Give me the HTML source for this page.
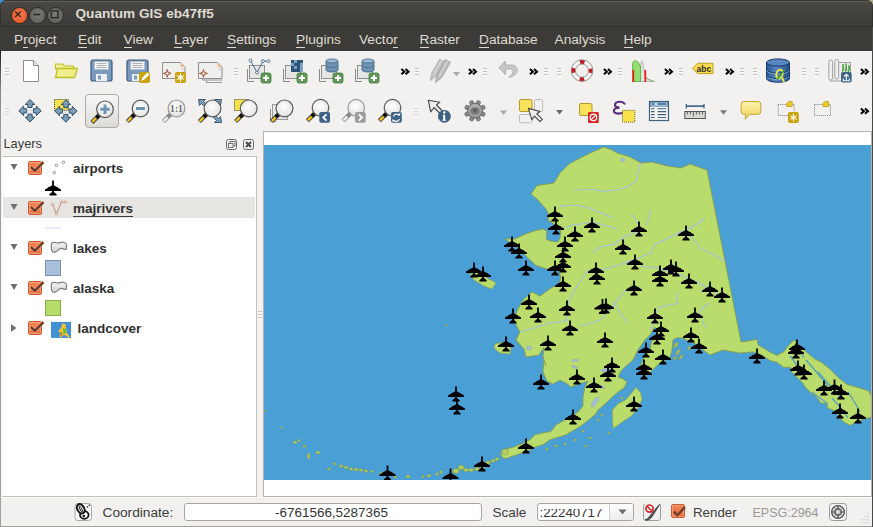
<!DOCTYPE html>
<html><head><meta charset="utf-8">
<style>
html,body{margin:0;padding:0;}
body{width:873px;height:527px;overflow:hidden;position:relative;background:#f2f1f0;font-family:"Liberation Sans",sans-serif;}
.abs{position:absolute;}
#titlebar{left:0;top:0;width:873px;height:27px;background:linear-gradient(#4a4945,#3c3b37);border-radius:6.5px 6.5px 0 0;box-shadow:inset 0 0 0 0.6px #2a2926;}
#menubar{left:0;top:27px;width:873px;height:24px;background:#3c3b37;}
.menu{position:absolute;top:31px;color:#dfdbd2;font-size:13.7px;line-height:17px;white-space:nowrap;}
.menu u{text-decoration:none;border-bottom:1px solid #dfdbd2;}
.title{position:absolute;left:75.5px;top:6px;color:#dfdbd2;font-weight:bold;font-size:13.6px;line-height:16px;white-space:nowrap;}
.wb{position:absolute;top:6.5px;width:15px;height:15px;border-radius:50%;}
#tree{left:2px;top:156px;width:255px;height:341px;background:#fff;border:1px solid #c3c0ba;border-left:none;box-sizing:border-box;}
.lname{position:absolute;font-weight:bold;font-size:13.5px;line-height:16px;color:#303030;white-space:nowrap;}
.cb{position:absolute;width:14px;height:14px;box-sizing:border-box;border-radius:2px;background:linear-gradient(#f48456,#ea6e40);border:1px solid #cc5a2a;box-shadow:inset 0 0 0 1px rgba(255,220,200,0.35);}
#canvas{left:263px;top:131px;width:609px;height:366px;background:#fff;border:1px solid #b5b2ac;box-sizing:border-box;}
#status{left:0;top:497px;width:873px;height:30px;background:#f2f1f0;border-top:1px solid #fbfbfa;border-bottom:1px solid #a3a19c;box-sizing:border-box;}
.st{position:absolute;font-size:13.5px;line-height:16px;color:#3c3c3c;white-space:nowrap;}
</style></head><body>
<div class="abs" style="left:0;top:0;width:7px;height:7px;background:#3b8fd2"></div>
<div class="abs" style="left:866px;top:0;width:7px;height:7px;background:#a9a98a"></div>
<div id="titlebar" class="abs"></div>
<div id="menubar" class="abs"></div>
<div class="abs" style="left:3px;top:1px;width:867px;height:1px;background:#5e5d58;"></div>
<div class="wb" style="left:10.5px;background:radial-gradient(circle at 50% 40%,#f47a4e,#e2502a);border:1px solid #3a2a22;"></div>
<div class="wb" style="left:28.5px;background:radial-gradient(circle at 50% 40%,#7a7974,#5c5b56);border:1px solid #2e2d2a;"></div>
<div class="wb" style="left:46.5px;background:radial-gradient(circle at 50% 40%,#7a7974,#5c5b56);border:1px solid #2e2d2a;"></div>
<svg class="abs" style="left:-1px;top:-0.5px" width="80" height="27">
<path d="M16.2,11.4 l5.6,5.6 M21.8,11.4 l-5.6,5.6" stroke="#3a2418" stroke-width="1.4"/>
<path d="M34.3,14.5 h7" stroke="#2a2a28" stroke-width="1.6"/>
<rect x="52.2" y="10.9" width="6.8" height="6.8" fill="none" stroke="#2a2a28" stroke-width="1.4"/>
</svg>
<div class="title">Quantum GIS eb47ff5</div>
<div class="menu" style="left:14px">P<u>r</u>oject</div>
<div class="menu" style="left:78px"><u>E</u>dit</div>
<div class="menu" style="left:123.5px"><u>V</u>iew</div>
<div class="menu" style="left:174px"><u>L</u>ayer</div>
<div class="menu" style="left:227px"><u>S</u>ettings</div>
<div class="menu" style="left:296px"><u>P</u>lugins</div>
<div class="menu" style="left:359px">Vecto<u>r</u></div>
<div class="menu" style="left:419.5px"><u>R</u>aster</div>
<div class="menu" style="left:479px"><u>D</u>atabase</div>
<div class="menu" style="left:554.5px">Analysis</div>
<div class="menu" style="left:623.5px"><u>H</u>elp</div>

<svg class="abs" style="left:0;top:0" width="873" height="130">
<defs><radialGradient id="lens" cx="0.45" cy="0.4" r="0.6"><stop offset="0" stop-color="#ffffff"/><stop offset="1" stop-color="#e2e2e2"/></radialGradient><radialGradient id="gear" cx="0.5" cy="0.4" r="0.6"><stop offset="0" stop-color="#c8c8c8"/><stop offset="1" stop-color="#8a8a8a"/></radialGradient><linearGradient id="dbg" x1="0" y1="0" x2="1" y2="0"><stop offset="0" stop-color="#2a5894"/><stop offset="0.45" stop-color="#5a88c4"/><stop offset="1" stop-color="#1e4a86"/></linearGradient><linearGradient id="balloon" x1="0" y1="0" x2="0" y2="1"><stop offset="0" stop-color="#fcf0a8"/><stop offset="1" stop-color="#f0d65a"/></linearGradient><linearGradient id="btn" x1="0" y1="0" x2="0" y2="1"><stop offset="0" stop-color="#f7f7f6"/><stop offset="1" stop-color="#dcdbd8"/></linearGradient></defs>
<rect x="5" y="68" width="4" height="1" fill="#c2bfba"/><rect x="5" y="69" width="4" height="1" fill="#ffffff"/><rect x="5" y="71" width="4" height="1" fill="#c2bfba"/><rect x="5" y="72" width="4" height="1" fill="#ffffff"/><rect x="5" y="74" width="4" height="1" fill="#c2bfba"/><rect x="5" y="75" width="4" height="1" fill="#ffffff"/><path d="M23.5,60.5 h10 l5,5 v16 h-15 z" fill="#fff" stroke="#8c8c8c" stroke-width="1"/><path d="M33.5,60.5 v5 h5" fill="#e6e6e6" stroke="#8c8c8c" stroke-width="1"/><path d="M55.5,64 h7 l2,2 h9 v3 h-18 z" fill="#f0ef9a" stroke="#bfc026" stroke-width="1.2"/><path d="M57.5,68.5 h20 l-3,9 h-19 z" fill="#efee8a" stroke="#bfc026" stroke-width="1.3"/><rect x="91" y="60" width="21" height="21" rx="2" fill="#7a9bbd" stroke="#3a5a7c" stroke-width="1.2"/><rect x="94.5" y="61.5" width="14" height="8" fill="#f4f4f4" stroke="#b0b8c0" stroke-width="0.6"/><path d="M96.5,63.5 h10 M96.5,65.5 h10 M96.5,67.5 h10" stroke="#9aa0a6" stroke-width="0.8"/><rect x="96" y="74" width="11" height="7" fill="#eef0f2"/><rect x="98" y="75.5" width="3" height="4" fill="#7a9bbd"/><rect x="127" y="60" width="21" height="21" rx="2" fill="#7a9bbd" stroke="#3a5a7c" stroke-width="1.2"/><rect x="130.5" y="61.5" width="14" height="8" fill="#f4f4f4" stroke="#b0b8c0" stroke-width="0.6"/><path d="M132.5,63.5 h10 M132.5,65.5 h10 M132.5,67.5 h10" stroke="#9aa0a6" stroke-width="0.8"/><rect x="132" y="74" width="11" height="7" fill="#eef0f2"/><rect x="134" y="75.5" width="3" height="4" fill="#7a9bbd"/><rect x="139" y="72" width="11" height="11" rx="2" fill="#c9a20c"/><path d="M141,81 l1.5,-3.5 l5,-5 l2,2 l-5,5 z" fill="#fff"/><path d="M162.5,62.5 h18 l4.5,4.5 v11.5 h-22.5 z" fill="#efefed" stroke="#8e8e8e" stroke-width="1"/><path d="M180.5,62.5 v4.5 h4.5 z" fill="#f2c28e"/><path d="M181.5,68.5 h3 M181.5,69.8 h3" stroke="#c8c8c8" stroke-width="0.6"/><path d="M167.3,69.60000000000001 L168.20000000000002,72.5 L171.10000000000002,73.4 L168.20000000000002,74.30000000000001 L167.3,77.2 L166.4,74.30000000000001 L163.5,73.4 L166.4,72.5 Z" fill="#f0eeec" stroke="#a04a2a" stroke-width="1"/><rect x="175" y="72" width="11" height="11" rx="2" fill="#c9a20c"/><circle cx="180.5" cy="77.5" r="1.8" fill="none" stroke="#fff" stroke-width="1.1"/><path d="M180.5,73 v9 M176.6,75.2 l7.8,4.5 M176.6,79.8 l7.8,-4.5" stroke="#fff" stroke-width="0.9"/><path d="M202.5,78.5 v1.5 h19.5 M206.5,80.5 v2 h15.5" stroke="#8e8e8e" stroke-width="0.9" fill="none"/><path d="M198.5,62.5 h19 l4.5,4.5 v11.5 h-23.5 z" fill="#efefed" stroke="#8e8e8e" stroke-width="1"/><path d="M217.5,62.5 v4.5 h4.5 z" fill="#f2c28e"/><path d="M218.5,68.5 h3 M218.5,69.8 h3" stroke="#c8c8c8" stroke-width="0.6"/><path d="M203.5,69.60000000000001 L204.4,72.5 L207.3,73.4 L204.4,74.30000000000001 L203.5,77.2 L202.6,74.30000000000001 L199.7,73.4 L202.6,72.5 Z" fill="#f0eeec" stroke="#a04a2a" stroke-width="1"/><rect x="234" y="68" width="4" height="1" fill="#c2bfba"/><rect x="234" y="69" width="4" height="1" fill="#ffffff"/><rect x="234" y="71" width="4" height="1" fill="#c2bfba"/><rect x="234" y="72" width="4" height="1" fill="#ffffff"/><rect x="234" y="74" width="4" height="1" fill="#c2bfba"/><rect x="234" y="75" width="4" height="1" fill="#ffffff"/><path d="M247.5,69 v12.5 h6.5" stroke="#8a8a8a" stroke-width="1" fill="none"/><rect x="249.5" y="65.5" width="15" height="13" fill="#e6e6e4" stroke="#8e8e8e" stroke-width="1"/><path d="M250.5,60.5 L257,72.5 L263,61.2 H268.4" stroke="#4e6e8e" stroke-width="1" fill="none"/><circle cx="250.5" cy="60.5" r="1.5" fill="#e8eef4" stroke="#4e6e8e" stroke-width="0.9"/><circle cx="257" cy="72.5" r="1.5" fill="#e8eef4" stroke="#4e6e8e" stroke-width="0.9"/><circle cx="263" cy="61.2" r="1.5" fill="#e8eef4" stroke="#4e6e8e" stroke-width="0.9"/><circle cx="268.4" cy="61.2" r="1.5" fill="#e8eef4" stroke="#4e6e8e" stroke-width="0.9"/><rect x="261" y="73" width="10" height="10" rx="2" fill="#5f9a58" stroke="#3f7a3a" stroke-width="0.8"/><path d="M266,75 v6 M263,78 h6" stroke="#fff" stroke-width="2"/><path d="M283.5,69 v12.5 h6.5" stroke="#8a8a8a" stroke-width="1" fill="none"/><rect x="285.5" y="65.5" width="15" height="13" fill="#e6e6e4" stroke="#8e8e8e" stroke-width="1"/><rect x="291" y="60" width="12" height="12" fill="#7fa4c4"/><rect x="291" y="60" width="3" height="3" fill="#2d5278"/><rect x="297" y="60" width="6" height="3" fill="#2d5278"/><rect x="294" y="63" width="6" height="3" fill="#2d5278"/><rect x="291" y="66" width="3" height="3" fill="#2d5278"/><rect x="297" y="66" width="3" height="3" fill="#2d5278"/><rect x="291" y="69" width="9" height="3" fill="#2d5278"/><rect x="297" y="73" width="10" height="10" rx="2" fill="#5f9a58" stroke="#3f7a3a" stroke-width="0.8"/><path d="M302,75 v6 M299,78 h6" stroke="#fff" stroke-width="2"/><path d="M319.5,69 v12.5 h6.5" stroke="#8a8a8a" stroke-width="1" fill="none"/><rect x="321.5" y="65.5" width="15" height="13" fill="#e6e6e4" stroke="#8e8e8e" stroke-width="1"/><path d="M326,61 v9 a6.0,2 0 0 0 12,0 v-9" fill="#6f93b3" stroke="#4a6a88" stroke-width="0.9"/><ellipse cx="332.0" cy="61" rx="6.0" ry="2" fill="#9fbad2" stroke="#4a6a88" stroke-width="0.9"/><path d="M326,65.5 a6.0,2 0 0 0 12,0" fill="none" stroke="#4a6a88" stroke-width="0.8"/><rect x="333" y="73" width="10" height="10" rx="2" fill="#5f9a58" stroke="#3f7a3a" stroke-width="0.8"/><path d="M338,75 v6 M335,78 h6" stroke="#fff" stroke-width="2"/><path d="M355.5,69 v12.5 h6.5" stroke="#8a8a8a" stroke-width="1" fill="none"/><rect x="357.5" y="65.5" width="15" height="13" fill="#e6e6e4" stroke="#8e8e8e" stroke-width="1"/><path d="M362,61 v9 a6.0,2 0 0 0 12,0 v-9" fill="#6f93b3" stroke="#4a6a88" stroke-width="0.9"/><ellipse cx="368.0" cy="61" rx="6.0" ry="2" fill="#9fbad2" stroke="#4a6a88" stroke-width="0.9"/><path d="M362,65.5 a6.0,2 0 0 0 12,0" fill="none" stroke="#4a6a88" stroke-width="0.8"/><rect x="369" y="73" width="10" height="10" rx="2" fill="#5f9a58" stroke="#3f7a3a" stroke-width="0.8"/><path d="M374,75 v6 M371,78 h6" stroke="#fff" stroke-width="2"/><path d="M401.4,69 l3,2.65 l-3,2.65 M405.5,69 l3,2.65 l-3,2.65" stroke="#000" stroke-width="2" fill="none"/><rect x="415" y="68" width="4" height="1" fill="#c2bfba"/><rect x="415" y="69" width="4" height="1" fill="#ffffff"/><rect x="415" y="71" width="4" height="1" fill="#c2bfba"/><rect x="415" y="72" width="4" height="1" fill="#ffffff"/><rect x="415" y="74" width="4" height="1" fill="#c2bfba"/><rect x="415" y="75" width="4" height="1" fill="#ffffff"/><path d="M430.3,80.8 L431.8,73 L439.6,59.3 L444.2,61.8 L436.4,75.6 Z" fill="#c4c4c4" stroke="#a8a8a8" stroke-width="0.8"/><path d="M433.5,74.5 L441.5,60.5" stroke="#e0e0e0" stroke-width="1"/><path d="M435.4,82.8 L436.9,75 L445,59.5 L450.5,62.3 L441.8,77.5 Z" fill="#bcbcbc" stroke="#a0a0a0" stroke-width="0.8"/><path d="M439,76.5 L447.3,61" stroke="#dedede" stroke-width="1"/><path d="M453,72 h7 l-3.5,4.5 z" fill="#a8a8a8"/><path d="M468.9,69 l3,2.65 l-3,2.65 M473,69 l3,2.65 l-3,2.65" stroke="#000" stroke-width="2" fill="none"/><rect x="483" y="68" width="4" height="1" fill="#c2bfba"/><rect x="483" y="69" width="4" height="1" fill="#ffffff"/><rect x="483" y="71" width="4" height="1" fill="#c2bfba"/><rect x="483" y="72" width="4" height="1" fill="#ffffff"/><rect x="483" y="74" width="4" height="1" fill="#c2bfba"/><rect x="483" y="75" width="4" height="1" fill="#ffffff"/><path d="M499.1,67.7 L505.4,61.1 V65.1 H511.5 C515,65.1 517.2,67.5 517.2,70.5 C517.2,73.6 514,76.6 508.8,77.3 C511,75.5 513,73.6 513,71.6 C513,70 512,69 510.5,69 H505.4 V74.5 Z" fill="#c8c8c8" stroke="#a6a6a6" stroke-width="0.9" stroke-linejoin="round"/><path d="M529.9,69 l3,2.65 l-3,2.65 M534,69 l3,2.65 l-3,2.65" stroke="#000" stroke-width="2" fill="none"/><rect x="544" y="68" width="4" height="1" fill="#c2bfba"/><rect x="544" y="69" width="4" height="1" fill="#ffffff"/><rect x="544" y="71" width="4" height="1" fill="#c2bfba"/><rect x="544" y="72" width="4" height="1" fill="#ffffff"/><rect x="544" y="74" width="4" height="1" fill="#c2bfba"/><rect x="544" y="75" width="4" height="1" fill="#ffffff"/><rect x="557" y="68" width="4" height="1" fill="#c2bfba"/><rect x="557" y="69" width="4" height="1" fill="#ffffff"/><rect x="557" y="71" width="4" height="1" fill="#c2bfba"/><rect x="557" y="72" width="4" height="1" fill="#ffffff"/><rect x="557" y="74" width="4" height="1" fill="#c2bfba"/><rect x="557" y="75" width="4" height="1" fill="#ffffff"/><circle cx="582" cy="70.6" r="8.7" fill="none" stroke="#f4f4f4" stroke-width="4.2"/><circle cx="582" cy="70.6" r="8.7" fill="none" stroke="#c41a20" stroke-width="4.2" stroke-dasharray="4.6 9.065" stroke-dashoffset="2.3"/><circle cx="582" cy="70.6" r="10.8" fill="none" stroke="#8a8a8a" stroke-width="0.9"/><circle cx="582" cy="70.6" r="6.6" fill="none" stroke="#8a8a8a" stroke-width="0.9"/><path d="M603.9,69 l3,2.65 l-3,2.65 M608,69 l3,2.65 l-3,2.65" stroke="#000" stroke-width="2" fill="none"/><rect x="618" y="68" width="4" height="1" fill="#c2bfba"/><rect x="618" y="69" width="4" height="1" fill="#ffffff"/><rect x="618" y="71" width="4" height="1" fill="#c2bfba"/><rect x="618" y="72" width="4" height="1" fill="#ffffff"/><rect x="618" y="74" width="4" height="1" fill="#c2bfba"/><rect x="618" y="75" width="4" height="1" fill="#ffffff"/><path d="M640,81.5 C640.5,70 640.8,62 641.6,61 C642.6,60.4 643.5,66 644,70 C645,75 646,78 648,79 C651,80.5 653,81 654.5,81.5 Z" fill="#e4e4e4" stroke="#a8a8a8" stroke-width="0.8"/><path d="M646,78 C649,80 652,81 654.5,81.5" fill="none" stroke="#6ab84a" stroke-width="0.9"/><path d="M632.6,81.5 V63.5 C633,60.5 635,60 637,61.3 C639,62.8 640,65 640.6,67 V81.5 Z" fill="#92dc72" stroke="#62b040" stroke-width="0.9"/><path d="M633.3,70 V82 M645.3,70 V82" stroke="#ee1a1a" stroke-width="1.7"/><path d="M664.9,69 l3,2.65 l-3,2.65 M669,69 l3,2.65 l-3,2.65" stroke="#000" stroke-width="2" fill="none"/><rect x="679" y="68" width="4" height="1" fill="#c2bfba"/><rect x="679" y="69" width="4" height="1" fill="#ffffff"/><rect x="679" y="71" width="4" height="1" fill="#c2bfba"/><rect x="679" y="72" width="4" height="1" fill="#ffffff"/><rect x="679" y="74" width="4" height="1" fill="#c2bfba"/><rect x="679" y="75" width="4" height="1" fill="#ffffff"/><path d="M692.5,68.3 l5,-5 h15.5 v10.3 h-15.5 z" fill="#f6dc4c" stroke="#c0a020" stroke-width="1"/><text x="696.5" y="72.2" font-family="Liberation Sans" font-weight="bold" font-size="8.6" fill="#303030">abc</text><path d="M725.9,69 l3,2.65 l-3,2.65 M730,69 l3,2.65 l-3,2.65" stroke="#000" stroke-width="2" fill="none"/><rect x="740" y="68" width="4" height="1" fill="#c2bfba"/><rect x="740" y="69" width="4" height="1" fill="#ffffff"/><rect x="740" y="71" width="4" height="1" fill="#c2bfba"/><rect x="740" y="72" width="4" height="1" fill="#ffffff"/><rect x="740" y="74" width="4" height="1" fill="#c2bfba"/><rect x="740" y="75" width="4" height="1" fill="#ffffff"/><rect x="753" y="68" width="4" height="1" fill="#c2bfba"/><rect x="753" y="69" width="4" height="1" fill="#ffffff"/><rect x="753" y="71" width="4" height="1" fill="#c2bfba"/><rect x="753" y="72" width="4" height="1" fill="#ffffff"/><rect x="753" y="74" width="4" height="1" fill="#c2bfba"/><rect x="753" y="75" width="4" height="1" fill="#ffffff"/><path d="M766.5,62.5 v16 a11.5,3.8 0 0 0 23,0 v-16" fill="url(#dbg)" stroke="#1a3a6a" stroke-width="1"/><ellipse cx="778" cy="62.5" rx="11.5" ry="3.6" fill="#5a86c0" stroke="#1a3a6a" stroke-width="1"/><path d="M766.5,69.5 a11.5,3.6 0 0 0 23,0 M766.5,75 a11.5,3.6 0 0 0 23,0" fill="none" stroke="#1a3a6a" stroke-width="1"/><path d="M767,70.7 a11,3.4 0 0 0 22,0 M767,76.2 a11,3.4 0 0 0 22,0" fill="none" stroke="#8ab0e0" stroke-width="0.8"/><ellipse cx="779.5" cy="74" rx="3" ry="4.5" transform="rotate(20 779.5 74)" fill="none" stroke="#e8e840" stroke-width="2"/><path d="M782,77 l2,5" stroke="#e8e840" stroke-width="2"/><path d="M777,80 l8,-11" stroke="#3a9a3a" stroke-width="1.3"/><rect x="802" y="68" width="4" height="1" fill="#c2bfba"/><rect x="802" y="69" width="4" height="1" fill="#ffffff"/><rect x="802" y="71" width="4" height="1" fill="#c2bfba"/><rect x="802" y="72" width="4" height="1" fill="#ffffff"/><rect x="802" y="74" width="4" height="1" fill="#c2bfba"/><rect x="802" y="75" width="4" height="1" fill="#ffffff"/><rect x="815" y="68" width="4" height="1" fill="#c2bfba"/><rect x="815" y="69" width="4" height="1" fill="#ffffff"/><rect x="815" y="71" width="4" height="1" fill="#c2bfba"/><rect x="815" y="72" width="4" height="1" fill="#ffffff"/><rect x="815" y="74" width="4" height="1" fill="#c2bfba"/><rect x="815" y="75" width="4" height="1" fill="#ffffff"/><path d="M838.5,62.5 h12 v18.5 h-21" fill="#ececec" stroke="#9a9a9a" stroke-width="0.9"/><rect x="828.8" y="60" width="3.8" height="20" rx="1.9" fill="#efefef" stroke="#9a9a9a" stroke-width="0.9"/><rect x="834.8" y="59.5" width="3.8" height="19.5" rx="1.9" fill="#efefef" stroke="#9a9a9a" stroke-width="0.9"/><path d="M842.5,72 l0.5,-8 l1,7 M845.5,72 l0.5,-8.5 l1,8 M848.5,72 l0.5,-7 l1,6" fill="none" stroke="#4aa040" stroke-width="1"/><rect x="841" y="72" width="10.7" height="10.6" rx="2" fill="#3d6284"/><path d="M846.3,80 v-5 M844,76.5 l2.3,-2.3 l2.3,2.3 M843.3,78.5 v2.2 h6 v-2.2" stroke="#fff" stroke-width="1.1" fill="none"/><path d="M860.9,69 l3,2.65 l-3,2.65 M865,69 l3,2.65 l-3,2.65" stroke="#000" stroke-width="2" fill="none"/><rect x="5" y="108.5" width="4" height="1" fill="#c2bfba"/><rect x="5" y="109.5" width="4" height="1" fill="#ffffff"/><rect x="5" y="111.5" width="4" height="1" fill="#c2bfba"/><rect x="5" y="112.5" width="4" height="1" fill="#ffffff"/><rect x="5" y="114.5" width="4" height="1" fill="#c2bfba"/><rect x="5" y="115.5" width="4" height="1" fill="#ffffff"/><rect x="24" y="104.8" width="12" height="12" fill="#fdfdfd"/><rect x="28" y="108.8" width="4" height="4" fill="#e6e6e6"/><path transform="rotate(0 30 110.8)" d="M30,99.6 L34.8,104.5 H32.1 V107.5 H27.9 V104.5 H25.2 Z" fill="#7b9db6" stroke="#2f506b" stroke-width="1" stroke-linejoin="miter"/><path transform="rotate(90 30 110.8)" d="M30,99.6 L34.8,104.5 H32.1 V107.5 H27.9 V104.5 H25.2 Z" fill="#7b9db6" stroke="#2f506b" stroke-width="1" stroke-linejoin="miter"/><path transform="rotate(180 30 110.8)" d="M30,99.6 L34.8,104.5 H32.1 V107.5 H27.9 V104.5 H25.2 Z" fill="#7b9db6" stroke="#2f506b" stroke-width="1" stroke-linejoin="miter"/><path transform="rotate(270 30 110.8)" d="M30,99.6 L34.8,104.5 H32.1 V107.5 H27.9 V104.5 H25.2 Z" fill="#7b9db6" stroke="#2f506b" stroke-width="1" stroke-linejoin="miter"/><rect x="59.900000000000006" y="105" width="12" height="12" fill="#fdfdfd"/><rect x="63.900000000000006" y="109" width="4" height="4" fill="#e6e6e6"/><rect x="54.5" y="99.5" width="14" height="10.8" fill="#f8e24a" stroke="#2a2a2a" stroke-width="0.9" stroke-dasharray="1,1"/><path transform="rotate(0 65.9 111)" d="M65.9,99.8 L70.7,104.7 H68.0 V107.7 H63.800000000000004 V104.7 H61.10000000000001 Z" fill="#7b9db6" stroke="#2f506b" stroke-width="1" stroke-linejoin="miter"/><path transform="rotate(90 65.9 111)" d="M65.9,99.8 L70.7,104.7 H68.0 V107.7 H63.800000000000004 V104.7 H61.10000000000001 Z" fill="#7b9db6" stroke="#2f506b" stroke-width="1" stroke-linejoin="miter"/><path transform="rotate(180 65.9 111)" d="M65.9,99.8 L70.7,104.7 H68.0 V107.7 H63.800000000000004 V104.7 H61.10000000000001 Z" fill="#7b9db6" stroke="#2f506b" stroke-width="1" stroke-linejoin="miter"/><path transform="rotate(270 65.9 111)" d="M65.9,99.8 L70.7,104.7 H68.0 V107.7 H63.800000000000004 V104.7 H61.10000000000001 Z" fill="#7b9db6" stroke="#2f506b" stroke-width="1" stroke-linejoin="miter"/><rect x="85.5" y="94.5" width="33" height="33" rx="3.5" fill="url(#btn)" stroke="#aeaaa4" stroke-width="1"/><path d="M99.6,114.7 L91.9,122.4" stroke="#3a3a3a" stroke-width="4.2"/><path d="M96.1,118.2 L92.3,122.0" stroke="#f2c41e" stroke-width="2.4"/><path d="M99.6,114.7 L96.6,117.7" stroke="#111" stroke-width="4"/><circle cx="105" cy="109.3" r="8.3" fill="url(#lens)" stroke="#5a5a5a" stroke-width="1.2"/><path d="M105,104.6 v9.4 M100.3,109.3 h9.4" stroke="#6d94b5" stroke-width="3"/><path d="M135.1,113.9 L127.4,121.6" stroke="#3a3a3a" stroke-width="4.2"/><path d="M131.6,117.4 L127.8,121.2" stroke="#f2c41e" stroke-width="2.4"/><path d="M135.1,113.9 L132.1,116.9" stroke="#111" stroke-width="4"/><circle cx="140.5" cy="108.5" r="8.3" fill="url(#lens)" stroke="#5a5a5a" stroke-width="1.2"/><path d="M136,108.5 h8.8" stroke="#6d94b5" stroke-width="3"/><path d="M171.1,113.8 L163.4,121.5" stroke="#8a8a8a" stroke-width="4.2"/><path d="M167.6,117.3 L163.8,121.1" stroke="#f4f4f4" stroke-width="2.4"/><path d="M171.1,113.8 L168.1,116.8" stroke="#888" stroke-width="4"/><circle cx="176.5" cy="108.4" r="8.4" fill="url(#lens)" stroke="#9a9a9a" stroke-width="1.2"/><text x="176.5" y="111.8" text-anchor="middle" font-family="Liberation Serif" font-weight="bold" font-size="9.6" fill="#6a6a6a">1:1</text><g fill="#7b9db6" stroke="#2f506b" stroke-width="0.9"><path d="M198.5,99.5 h7 l-2,2 l3,3 l-2,2 l-3,-3 l-2,2 z"/><path d="M221.5,99.5 h-7 l2,2 l-3,3 l2,2 l3,-3 l2,2 z"/><path d="M221.5,122.5 h-7 l2,-2 l-3,-3 l2,-2 l3,3 l2,-2 z"/></g><path d="M207.1,113.8 L199.4,121.5" stroke="#3a3a3a" stroke-width="4.2"/><path d="M203.6,117.3 L199.8,121.1" stroke="#f2c41e" stroke-width="2.4"/><path d="M207.1,113.8 L204.1,116.8" stroke="#111" stroke-width="4"/><circle cx="212.5" cy="108.4" r="8.4" fill="url(#lens)" stroke="#5a5a5a" stroke-width="1.2"/><rect x="234.5" y="99.5" width="14" height="11" fill="#f8e24a" stroke="#2a2a2a" stroke-width="0.9" stroke-dasharray="1,1"/><path d="M243.3,113.8 L235.6,121.5" stroke="#3a3a3a" stroke-width="4.2"/><path d="M239.8,117.3 L236.0,121.1" stroke="#f2c41e" stroke-width="2.4"/><path d="M243.3,113.8 L240.3,116.8" stroke="#111" stroke-width="4"/><circle cx="248.7" cy="108.4" r="8.4" fill="url(#lens)" stroke="#5a5a5a" stroke-width="1.2"/><path d="M270.5,109 v12.3 h6" stroke="#8a8a8a" fill="none"/><rect x="272.5" y="104.5" width="15" height="15" fill="#e6e6e4" stroke="#9a9a9a"/><path d="M279.1,113.8 L271.4,121.5" stroke="#3a3a3a" stroke-width="4.2"/><path d="M275.6,117.3 L271.8,121.1" stroke="#f2c41e" stroke-width="2.4"/><path d="M279.1,113.8 L276.1,116.8" stroke="#111" stroke-width="4"/><circle cx="284.5" cy="108.4" r="8.4" fill="url(#lens)" stroke="#5a5a5a" stroke-width="1.2"/><path d="M315.1,113.1 L307.4,120.8" stroke="#3a3a3a" stroke-width="4.2"/><path d="M311.6,116.6 L307.8,120.4" stroke="#f2c41e" stroke-width="2.4"/><path d="M315.1,113.1 L312.1,116.1" stroke="#111" stroke-width="4"/><circle cx="320.5" cy="107.7" r="8.3" fill="url(#lens)" stroke="#5a5a5a" stroke-width="1.2"/><rect x="319.3" y="112" width="10.7" height="10.7" rx="1.8" fill="#3d6284"/><path d="M326.5,114.3 l-3.3,3.2 l3.3,3.2" stroke="#fff" stroke-width="1.8" fill="none"/><path d="M350.8,113.1 L343.1,120.8" stroke="#8a8a8a" stroke-width="4.2"/><path d="M347.3,116.6 L343.5,120.4" stroke="#f4f4f4" stroke-width="2.4"/><path d="M350.8,113.1 L347.8,116.1" stroke="#888" stroke-width="4"/><circle cx="356.2" cy="107.7" r="8.3" fill="url(#lens)" stroke="#9a9a9a" stroke-width="1.2"/><rect x="355" y="112" width="10.7" height="10.7" rx="1.8" fill="#9c9c9c"/><path d="M358.8,114.3 l3.3,3.2 l-3.3,3.2" stroke="#fff" stroke-width="1.8" fill="none"/><path d="M387.1,113.1 L379.4,120.8" stroke="#3a3a3a" stroke-width="4.2"/><path d="M383.6,116.6 L379.8,120.4" stroke="#f2c41e" stroke-width="2.4"/><path d="M387.1,113.1 L384.1,116.1" stroke="#111" stroke-width="4"/><circle cx="392.5" cy="107.7" r="8.3" fill="url(#lens)" stroke="#5a5a5a" stroke-width="1.2"/><rect x="391" y="112" width="10.8" height="10.7" rx="1.8" fill="#3d6284"/><path d="M393.5,116.5 a3,3 0 0 1 5.5,-1 M399.3,119 a3,3 0 0 1 -5.5,1" stroke="#fff" stroke-width="1.3" fill="none"/><path d="M397.5,114 l2.5,2 l0.3,-2.8 z M395,121 l-2.5,-2 l-0.3,2.8 z" fill="#fff"/><rect x="414" y="108.5" width="4" height="1" fill="#c2bfba"/><rect x="414" y="109.5" width="4" height="1" fill="#ffffff"/><rect x="414" y="111.5" width="4" height="1" fill="#c2bfba"/><rect x="414" y="112.5" width="4" height="1" fill="#ffffff"/><rect x="414" y="114.5" width="4" height="1" fill="#c2bfba"/><rect x="414" y="115.5" width="4" height="1" fill="#ffffff"/><path d="M428.3,100.3 L439.9,102.2 L436.5,105 L442.5,111 L440,113.5 L434,107.5 L430.7,111.8 Z" fill="#ececec" stroke="#454545" stroke-width="1.1" stroke-linejoin="round"/><circle cx="444.4" cy="116.3" r="6.4" fill="#3d6284"/><path d="M443,114.8 h2.2 v5 h1 v0.9 h-4 v-0.9 h0.9 v-4.1 h-0.1 z" fill="#fff"/><circle cx="444.3" cy="112.5" r="1.2" fill="#fff"/><g transform="translate(475,110.8)"><rect x="-1.9" y="-10.6" width="3.8" height="5" rx="1" fill="#8c8c8c" stroke="#5a5a5a" stroke-width="0.6" transform="rotate(22.5)"/><rect x="-1.9" y="-10.6" width="3.8" height="5" rx="1" fill="#8c8c8c" stroke="#5a5a5a" stroke-width="0.6" transform="rotate(67.5)"/><rect x="-1.9" y="-10.6" width="3.8" height="5" rx="1" fill="#8c8c8c" stroke="#5a5a5a" stroke-width="0.6" transform="rotate(112.5)"/><rect x="-1.9" y="-10.6" width="3.8" height="5" rx="1" fill="#8c8c8c" stroke="#5a5a5a" stroke-width="0.6" transform="rotate(157.5)"/><rect x="-1.9" y="-10.6" width="3.8" height="5" rx="1" fill="#8c8c8c" stroke="#5a5a5a" stroke-width="0.6" transform="rotate(202.5)"/><rect x="-1.9" y="-10.6" width="3.8" height="5" rx="1" fill="#8c8c8c" stroke="#5a5a5a" stroke-width="0.6" transform="rotate(247.5)"/><rect x="-1.9" y="-10.6" width="3.8" height="5" rx="1" fill="#8c8c8c" stroke="#5a5a5a" stroke-width="0.6" transform="rotate(292.5)"/><rect x="-1.9" y="-10.6" width="3.8" height="5" rx="1" fill="#8c8c8c" stroke="#5a5a5a" stroke-width="0.6" transform="rotate(337.5)"/><circle r="7.6" fill="url(#gear)" stroke="#5a5a5a" stroke-width="0.7"/><ellipse rx="4.2" ry="3.4" fill="#7a7a7a" stroke="#6a6a6a" stroke-width="0.5"/><ellipse rx="1.6" ry="1.2" cy="-0.3" fill="#555"/></g><path d="M500,110.4 h7 l-3.5,4.5 z" fill="#a8a8a8"/><rect x="519.5" y="99.5" width="12.5" height="12" rx="1.5" fill="#f8e25a" stroke="#b39a2a" stroke-width="1"/><rect x="534.5" y="99.5" width="8.2" height="11.8" rx="1.5" fill="#f0f0ef" stroke="#b5b5b2" stroke-width="0.9"/><rect x="519.5" y="114.5" width="12.5" height="8.3" rx="1.5" fill="#f0f0ef" stroke="#b5b5b2" stroke-width="0.9"/><path d="M528.4,108.4 L540,111.5 L536.8,113.8 L542.3,119.3 L540,121.6 L534.5,116.1 L531.8,119.6 Z" fill="#eeeeee" stroke="#454545" stroke-width="1.1" stroke-linejoin="round"/><path d="M556,110 h7 l-3.5,4.5 z" fill="#6a6a6a"/><rect x="579.5" y="103.5" width="12.5" height="12" rx="1.5" fill="#f8e25a" stroke="#b39a2a" stroke-width="1"/><rect x="588" y="112" width="10.8" height="10.9" rx="1" fill="#d42a2a"/><circle cx="593.4" cy="117.4" r="3.2" fill="none" stroke="#fff" stroke-width="1.2"/><path d="M591.2,119.6 l4.4,-4.4" stroke="#fff" stroke-width="1.2"/><path d="M624.5,103.6 C622.5,101.3 616.5,101 615.2,103.8 C614.2,106.2 616.5,107.6 619.5,107.6 C615.5,107.6 613.2,109.3 614,111.6 C615.2,114.3 622,114.2 624.8,111.6" stroke="#5a2a78" stroke-width="2.1" fill="none" stroke-linecap="round"/><rect x="622.5" y="110.3" width="12.3" height="11.8" fill="#f8e24a" stroke="#5a5a2a" stroke-width="0.9" stroke-dasharray="1,1"/><rect x="649.5" y="101.5" width="19" height="19" fill="#f6f6f4" stroke="#3d6284" stroke-width="1.2"/><rect x="650.1" y="102.1" width="17.8" height="4" fill="#bfe0fa" stroke="#3d6284" stroke-width="0.8"/><path d="M651.5,104 h3 M657.5,104 h9" stroke="#3d6284" stroke-width="1.3"/><path d="M651,108.7 h3.6 M657.6,108.7 h8.6 M651,111.6 h3.6 M657.6,111.6 h8.6 M651,114.6 h3.6 M657.6,114.6 h8.6 M651,117.5 h3.6 M657.6,117.5 h8.6" stroke="#3d6284" stroke-width="1.1"/><path d="M686.3,106.1 h17.7" stroke="#2f5478" stroke-width="1.5"/><path d="M686.3,104 v4.6 M704,104 v4.6" stroke="#2f5478" stroke-width="1.2"/><rect x="684.8" y="111.5" width="20.5" height="7" fill="#d6dad2" stroke="#555" stroke-width="1"/><path d="M687.3,112 v2.5 M690.4,112 v2.5 M693.4,112 v4.5 M696.4,112 v2.5 M699.4,112 v2.5 M702.5,112 v2.5" stroke="#555" stroke-width="0.9"/><path d="M720,110.3 h7 l-3.5,4.5 z" fill="#7a7a7a"/><path d="M744,101.5 h14 a2.8,2.8 0 0 1 2.8,2.8 v7.2 a2.8,2.8 0 0 1 -2.8,2.8 h-8.5 l-4.3,5 l0.8,-5 h-2 a2.8,2.8 0 0 1 -2.8,-2.8 v-7.2 a2.8,2.8 0 0 1 2.8,-2.8 z" fill="url(#balloon)" stroke="#c4a430" stroke-width="1"/><path d="M744.5,104 h9" stroke="#fff8d0" stroke-width="1" opacity="0.8"/><rect x="778.2" y="104.5" width="16" height="11" fill="none" stroke="#6a6a6a" stroke-width="0.9" stroke-dasharray="1,1.1"/><path d="M786.7,106.5 v-3 l2,-2 h3.5 v5 z" fill="#f0cc20" stroke="#b09010" stroke-width="0.7"/><rect x="788" y="112" width="10.8" height="10.9" rx="2" fill="#c9a20c"/><circle cx="793.4" cy="117.5" r="1.6" fill="none" stroke="#fff" stroke-width="1"/><path d="M793.4,113.3 v8.4 M789.8,115.4 l7.2,4.2 M789.8,119.6 l7.2,-4.2" stroke="#fff" stroke-width="0.8"/><rect x="814.5" y="104.5" width="16" height="11" fill="none" stroke="#6a6a6a" stroke-width="0.9" stroke-dasharray="1,1.1"/><path d="M823,106.5 v-3 l2,-2 h3.5 v5 z" fill="#f0cc20" stroke="#b09010" stroke-width="0.7"/><path d="M860.9,108.5 l3,2.65 l-3,2.65 M865,108.5 l3,2.65 l-3,2.65" stroke="#000" stroke-width="2" fill="none"/>
</svg>

<div class="abs" style="left:3.5px;top:136px;font-size:12.8px;line-height:16px;color:#3c3c3c">Layers</div>
<svg class="abs" style="left:220px;top:132.5px" width="40" height="22">
<rect x="6.5" y="6.5" width="10" height="10" rx="2" fill="none" stroke="#6a6a6a" stroke-width="1"/>
<rect x="10" y="8.5" width="5" height="4.5" fill="none" stroke="#6a6a6a" stroke-width="0.9"/><rect x="8.5" y="10.5" width="4.5" height="4" fill="#f2f1f0" stroke="#6a6a6a" stroke-width="0.9"/>
<rect x="23.5" y="6.5" width="10" height="10" rx="2" fill="none" stroke="#6a6a6a" stroke-width="1"/>
<path d="M26,9 l5,5 M31,9 l-5,5" stroke="#4a4a4a" stroke-width="2"/>
</svg>

<div id="tree" class="abs"></div>
<div class="abs" style="left:3px;top:197px;width:252px;height:21px;background:#e6e5e2;"></div>
<svg class="abs" style="left:0;top:150px" width="260" height="200">
<path d="M10.5,14 h7 l-3.5,6 z M10.5,54 h7 l-3.5,6 z M10.5,94 h7 l-3.5,6 z M10.5,134 h7 l-3.5,6 z" fill="#6e6e6e"/>
<path d="M11,174 v8 l5.5,-4 z" fill="#6e6e6e"/>
<circle cx="54.3" cy="22.5" r="1.3" fill="none" stroke="#8a8a8a" stroke-width="0.9"/><circle cx="56.3" cy="15.3" r="1.3" fill="none" stroke="#8a8a8a" stroke-width="0.9"/><circle cx="63.3" cy="12.3" r="1.3" fill="none" stroke="#8a8a8a" stroke-width="0.9"/>
<use href="#pl" x="45" y="30"/>
<path d="M52.5,54.5 L56.5,63.6 L61.4,52.2 L65.6,52.2" stroke="#c48a72" stroke-width="1" fill="none"/><g fill="#f4f0ee" stroke="#c48a72" stroke-width="0.8"><circle cx="52.5" cy="54.5" r="1.2"/><circle cx="56.5" cy="63.6" r="1.2"/><circle cx="61.4" cy="52.2" r="1.2"/><circle cx="65.6" cy="52.2" r="1.2"/></g>
<path d="M45,78 h16" stroke="#c8daf0" stroke-width="1"/>
<path transform="translate(0,0)" d="M52.2,92.7 C55,91.5 57,93 58.4,93.1 C60,93 62,91.5 63.9,92.3 C66,93 66.8,95 66.4,96.3 C66.5,98 66.5,99 66,99.4 C64,99.5 62,98 60.5,98.5 C58,99.5 56,102.5 54.3,102.3 C52.5,102 51.8,101 51.8,100.6 C51.2,98 51,96 51.3,95.2 C51.3,94 51.5,93 52.2,92.7 Z" fill="url(#polyg)" stroke="#7a7a7a" stroke-width="1.2"/>
<path transform="translate(0,40)" d="M52.2,92.7 C55,91.5 57,93 58.4,93.1 C60,93 62,91.5 63.9,92.3 C66,93 66.8,95 66.4,96.3 C66.5,98 66.5,99 66,99.4 C64,99.5 62,98 60.5,98.5 C58,99.5 56,102.5 54.3,102.3 C52.5,102 51.8,101 51.8,100.6 C51.2,98 51,96 51.3,95.2 C51.3,94 51.5,93 52.2,92.7 Z" fill="url(#polyg)" stroke="#7a7a7a" stroke-width="1.2"/>
<rect x="45.5" y="110.5" width="15" height="15" fill="#a6bfdd" stroke="#7a90aa" stroke-width="1"/>
<rect x="45.5" y="150.5" width="15" height="15" fill="#b6dc6c" stroke="#8fa84a" stroke-width="1"/>
<defs><linearGradient id="polyg" x1="0" y1="0" x2="0" y2="1"><stop offset="0" stop-color="#f4f4f4"/><stop offset="1" stop-color="#d4d4d4"/></linearGradient></defs><rect x="51" y="171.9" width="20" height="16" fill="#3f90d4"/><path d="M62,173.5 L65.5,174 L66,178 L67,183 L70,187 L68,187.5 L65,185 L62,186 L61,187.9 L59.5,186 L60,183 L58,181 L60,179 L61.5,177 Z" fill="#f2c030"/><path d="M63,178 L65.5,179 L66,183 L63.5,184 Z" fill="#50c040"/><path d="M60,182 L62.5,183 L62,186 L60.5,185.5 Z" fill="#a08040"/></svg>
<div class="cb" style="left:28px;top:161px"></div>
<div class="cb" style="left:28px;top:201px"></div>
<div class="cb" style="left:28px;top:241px"></div>
<div class="cb" style="left:28px;top:281px"></div>
<div class="cb" style="left:28px;top:321px"></div>
<svg class="abs" style="left:0;top:150px" width="60" height="200">
<g fill="none" stroke-linejoin="round"><path d="M31,17 l3.8,3.8 l8.6,-8.6 M31,57 l3.8,3.8 l8.6,-8.6 M31,97 l3.8,3.8 l8.6,-8.6 M31,137 l3.8,3.8 l8.6,-8.6 M31,177 l3.8,3.8 l8.6,-8.6" stroke="#ffc8a8" stroke-opacity="0.6" stroke-width="3.8"/><path d="M31,17 l3.8,3.8 l8.6,-8.6 M31,57 l3.8,3.8 l8.6,-8.6 M31,97 l3.8,3.8 l8.6,-8.6 M31,137 l3.8,3.8 l8.6,-8.6 M31,177 l3.8,3.8 l8.6,-8.6" stroke="#6e3a2a" stroke-width="2.4"/></g>
</svg>
<div class="lname" style="left:73px;top:161px">airports</div>
<div class="lname" style="left:73px;top:201px;border-bottom:1px solid #3c3c3c;line-height:15px">majrivers</div>
<div class="lname" style="left:73px;top:241px">lakes</div>
<div class="lname" style="left:73px;top:281px">alaska</div>
<div class="lname" style="left:77.5px;top:321px">landcover</div>

<svg class="abs" style="left:0;top:0" width="270" height="330"><rect x="258" y="311.2" width="4" height="1" fill="#c2bfba"/><rect x="258" y="312.2" width="4" height="1" fill="#ffffff"/><rect x="258" y="314.2" width="4" height="1" fill="#c2bfba"/><rect x="258" y="315.2" width="4" height="1" fill="#ffffff"/><rect x="258" y="317.2" width="4" height="1" fill="#c2bfba"/><rect x="258" y="318.2" width="4" height="1" fill="#ffffff"/></svg>

<div id="canvas" class="abs"></div>
<svg class="abs" style="left:0;top:0" width="873" height="497">
<defs><symbol id="pl" viewBox="-8 -8 16 16" width="16" height="16" overflow="visible"><g fill="#000"><path d="M-0.9,-7.5 H0.9 V6 H-0.9 z"/><path d="M-1.2,-2.6 L-8,1.4 V2.9 H8 V1.4 L1.2,-2.6 z"/><path d="M-5,0.5 L-4.4,-1.3 L-3.6,0 z M5,0.5 L4.4,-1.3 L3.6,0 z"/><path d="M-1,4 L-3.6,6.3 V7.5 H3.6 V6.3 L1,4 z"/></g></symbol><clipPath id="mc"><rect x="264" y="145" width="607" height="335"/></clipPath></defs>
<rect x="264" y="145" width="607" height="335" fill="#4a9fd5"/>
<g clip-path="url(#mc)"><path d="M604.0,147.0 L612.0,150.0 L617.0,153.0 L630.0,157.0 L641.0,163.0 L652.0,162.0 L667.0,166.0 L681.0,168.0 L690.0,164.0 L704.0,169.0 L707.0,170.0 L741.0,342.0 L744.6,341.6 L757.0,339.4 L758.2,345.0 L769.6,351.9 L776.8,355.4 L783.7,352.0 L788.8,345.1 L794.0,340.0 L804.2,350.2 L814.4,358.8 L821.2,362.2 L829.8,369.0 L838.3,377.6 L846.9,384.4 L858.8,387.8 L869.0,391.2 L872.0,398.0 L872.0,416.9 L865.7,418.6 L855.4,422.0 L850.3,425.4 L843.5,422.0 L838.3,415.2 L833.2,410.0 L828.0,408.3 L826.4,403.2 L821.2,403.2 L816.1,396.4 L811.0,393.0 L805.9,387.8 L802.5,382.7 L797.3,377.6 L792.2,372.5 L790.5,367.3 L783.7,367.3 L776.8,362.2 L770.0,360.5 L762.0,355.0 L753.7,351.9 L740.0,353.0 L723.0,350.0 L710.0,355.0 L699.0,347.0 L694.0,343.0 L688.0,341.0 L684.0,338.5 L677.0,337.5 L673.0,340.0 L672.0,350.0 L670.0,357.0 L665.0,360.5 L659.0,363.6 L651.4,371.2 L645.4,375.7 L642.3,374.2 L640.8,365.1 L643.8,357.5 L650.0,350.0 L651.4,342.3 L656.0,336.3 L657.0,330.0 L654.5,327.0 L650.0,334.7 L645.4,339.3 L637.8,350.0 L633.0,360.0 L626.0,366.0 L621.0,371.0 L618.0,377.0 L623.0,379.0 L627.0,382.0 L624.0,388.0 L618.0,392.0 L611.0,398.0 L605.0,404.0 L598.0,410.0 L595.0,414.7 L590.0,418.7 L582.0,425.2 L574.0,430.0 L566.0,434.8 L558.0,437.3 L550.0,439.7 L543.4,444.5 L535.3,447.0 L527.3,451.0 L516.0,455.0 L506.3,458.2 L503.0,458.2 L500.6,454.2 L505.0,449.4 L514.0,447.0 L522.0,443.7 L530.0,439.7 L535.0,434.8 L545.0,432.4 L551.0,431.6 L556.0,425.0 L563.0,421.0 L571.0,417.0 L579.0,411.0 L583.0,406.0 L583.0,397.0 L585.0,387.0 L588.0,381.0 L582.0,383.0 L576.0,385.0 L571.0,387.0 L566.0,383.0 L560.0,380.0 L553.0,384.0 L547.0,381.0 L543.0,372.0 L544.0,360.0 L546.0,366.0 L543.0,357.0 L544.0,347.0 L539.0,355.0 L526.0,357.0 L524.0,349.0 L516.0,340.0 L520.0,332.0 L514.0,321.0 L517.0,311.0 L523.0,300.0 L532.0,292.0 L540.0,296.0 L551.0,288.0 L559.0,284.5 L561.0,277.0 L559.0,271.0 L547.0,269.0 L536.0,265.5 L526.0,256.0 L517.0,247.0 L505.0,239.0 L515.0,239.0 L523.0,235.0 L534.0,231.0 L543.0,229.0 L547.0,231.0 L546.0,239.0 L550.0,241.0 L558.0,242.0 L560.0,238.0 L561.0,232.0 L557.0,226.0 L551.0,222.0 L548.0,220.0 L549.0,215.0 L546.0,209.0 L538.0,200.0 L531.0,194.0 L537.0,185.5 L554.0,183.0 L560.0,173.0 L569.0,164.0 L588.0,154.0 Z" fill="#b9dc6d" stroke="#8c9c3e" stroke-width="0.8" stroke-linejoin="round"/><path d="M470.0,274.0 L480.0,272.0 L487.0,278.0 L496.0,283.0 L492.0,289.0 L484.0,286.0 L474.0,280.0 Z" fill="#b9dc6d" stroke="#93a84a" stroke-width="0.8"/><path d="M495.0,344.0 L505.0,342.0 L511.0,346.0 L510.0,354.0 L500.0,353.0 L494.0,348.0 Z" fill="#b9dc6d" stroke="#93a84a" stroke-width="0.8"/><path d="M612.5,410.0 L617.8,404.0 L625.4,400.0 L630.0,395.0 L636.0,387.4 L640.6,392.7 L642.0,399.5 L637.5,408.6 L631.5,416.0 L623.9,420.8 L617.8,425.3 L613.2,428.4 L612.5,420.8 Z" fill="#b9dc6d" stroke="#93a84a" stroke-width="0.8"/><ellipse cx="265.4" cy="411" rx="1" ry="0.8" fill="#b2d062" stroke="#8e9c3c" stroke-width="0.6"/><ellipse cx="281.6" cy="427.3" rx="1" ry="0.8" fill="#b2d062" stroke="#8e9c3c" stroke-width="0.6"/><ellipse cx="295" cy="442.2" rx="2" ry="1.2" fill="#b2d062" stroke="#8e9c3c" stroke-width="0.6"/><ellipse cx="299" cy="440.5" rx="1.2" ry="1" fill="#b2d062" stroke="#8e9c3c" stroke-width="0.6"/><ellipse cx="304.5" cy="446.2" rx="1.5" ry="1" fill="#b2d062" stroke="#8e9c3c" stroke-width="0.6"/><ellipse cx="308.6" cy="456" rx="1.3" ry="3" fill="#b2d062" stroke="#8e9c3c" stroke-width="0.6"/><ellipse cx="318" cy="452.5" rx="2" ry="1.5" fill="#b2d062" stroke="#8e9c3c" stroke-width="0.6"/><ellipse cx="329" cy="469" rx="1.5" ry="1" fill="#b2d062" stroke="#8e9c3c" stroke-width="0.6"/><ellipse cx="334.3" cy="463.8" rx="1.5" ry="1" fill="#b2d062" stroke="#8e9c3c" stroke-width="0.6"/><ellipse cx="341" cy="466" rx="2" ry="1.3" fill="#b2d062" stroke="#8e9c3c" stroke-width="0.6"/><ellipse cx="346" cy="467.5" rx="2" ry="1.3" fill="#b2d062" stroke="#8e9c3c" stroke-width="0.6"/><ellipse cx="351" cy="469" rx="2" ry="1.3" fill="#b2d062" stroke="#8e9c3c" stroke-width="0.6"/><ellipse cx="356" cy="469.5" rx="2" ry="1.3" fill="#b2d062" stroke="#8e9c3c" stroke-width="0.6"/><ellipse cx="361" cy="470" rx="1.8" ry="1.2" fill="#b2d062" stroke="#8e9c3c" stroke-width="0.6"/><ellipse cx="366" cy="471" rx="2" ry="1.2" fill="#b2d062" stroke="#8e9c3c" stroke-width="0.6"/><ellipse cx="372" cy="471.5" rx="1.5" ry="1" fill="#b2d062" stroke="#8e9c3c" stroke-width="0.6"/><ellipse cx="382" cy="473.5" rx="2" ry="1.2" fill="#b2d062" stroke="#8e9c3c" stroke-width="0.6"/><ellipse cx="387" cy="474.5" rx="2" ry="1.2" fill="#b2d062" stroke="#8e9c3c" stroke-width="0.6"/><ellipse cx="395" cy="477" rx="1.3" ry="1" fill="#b2d062" stroke="#8e9c3c" stroke-width="0.6"/><ellipse cx="408" cy="476.5" rx="2" ry="1.3" fill="#b2d062" stroke="#8e9c3c" stroke-width="0.6"/><ellipse cx="423" cy="476.5" rx="1.3" ry="1" fill="#b2d062" stroke="#8e9c3c" stroke-width="0.6"/><ellipse cx="429" cy="475.7" rx="2" ry="1.3" fill="#b2d062" stroke="#8e9c3c" stroke-width="0.6"/><ellipse cx="437" cy="474" rx="1.5" ry="1.2" fill="#b2d062" stroke="#8e9c3c" stroke-width="0.6"/><ellipse cx="441" cy="472" rx="1.2" ry="1.5" fill="#b2d062" stroke="#8e9c3c" stroke-width="0.6"/><ellipse cx="456" cy="471" rx="3" ry="2.3" fill="#b2d062" stroke="#8e9c3c" stroke-width="0.6"/><ellipse cx="461" cy="467.5" rx="3" ry="2.2" fill="#b2d062" stroke="#8e9c3c" stroke-width="0.6"/><ellipse cx="466" cy="470" rx="2.5" ry="1.6" fill="#b2d062" stroke="#8e9c3c" stroke-width="0.6"/><ellipse cx="471" cy="470" rx="2.5" ry="1.5" fill="#b2d062" stroke="#8e9c3c" stroke-width="0.6"/><ellipse cx="477" cy="469" rx="2.5" ry="1.6" fill="#b2d062" stroke="#8e9c3c" stroke-width="0.6"/><ellipse cx="482" cy="467" rx="2.2" ry="1.5" fill="#b2d062" stroke="#8e9c3c" stroke-width="0.6"/><ellipse cx="488" cy="462.5" rx="2.5" ry="1.6" fill="#b2d062" stroke="#8e9c3c" stroke-width="0.6"/><ellipse cx="493" cy="461" rx="2" ry="1.4" fill="#b2d062" stroke="#8e9c3c" stroke-width="0.6"/><ellipse cx="497" cy="459" rx="2" ry="1.5" fill="#b2d062" stroke="#8e9c3c" stroke-width="0.6"/><ellipse cx="505" cy="452" rx="3.5" ry="3" fill="#b2d062" stroke="#8e9c3c" stroke-width="0.6"/><ellipse cx="447" cy="325" rx="1" ry="0.8" fill="#b2d062" stroke="#8e9c3c" stroke-width="0.6"/><ellipse cx="590" cy="438" rx="1.3" ry="1" fill="#b2d062" stroke="#8e9c3c" stroke-width="0.6"/><ellipse cx="583" cy="431" rx="1.2" ry="1" fill="#b2d062" stroke="#8e9c3c" stroke-width="0.6"/><ellipse cx="586" cy="446" rx="1.2" ry="1" fill="#b2d062" stroke="#8e9c3c" stroke-width="0.6"/><ellipse cx="598" cy="420" rx="1.2" ry="1" fill="#b2d062" stroke="#8e9c3c" stroke-width="0.6"/><ellipse cx="602" cy="415" rx="1.2" ry="1" fill="#b2d062" stroke="#8e9c3c" stroke-width="0.6"/><ellipse cx="575" cy="440" rx="1.3" ry="1" fill="#b2d062" stroke="#8e9c3c" stroke-width="0.6"/><ellipse cx="565" cy="444" rx="1.3" ry="1" fill="#b2d062" stroke="#8e9c3c" stroke-width="0.6"/><ellipse cx="547" cy="449" rx="1.3" ry="1" fill="#b2d062" stroke="#8e9c3c" stroke-width="0.6"/><ellipse cx="556" cy="446" rx="1.5" ry="1" fill="#b2d062" stroke="#8e9c3c" stroke-width="0.6"/><ellipse cx="622" cy="398" rx="1.2" ry="1" fill="#b2d062" stroke="#8e9c3c" stroke-width="0.6"/><ellipse cx="609" cy="433" rx="1.2" ry="1" fill="#b2d062" stroke="#8e9c3c" stroke-width="0.6"/><ellipse cx="676" cy="345" rx="3" ry="1.5" fill="#aac460" stroke="#93a040" stroke-width="0.7" transform="rotate(-55 676 345)"/><ellipse cx="678" cy="352" rx="3.5" ry="1.2" fill="#aac460" stroke="#93a040" stroke-width="0.7" transform="rotate(-55 678 352)"/><ellipse cx="681" cy="357" rx="3" ry="1" fill="#aac460" stroke="#93a040" stroke-width="0.7" transform="rotate(-55 681 357)"/><ellipse cx="675" cy="358" rx="2" ry="1" fill="#aac460" stroke="#93a040" stroke-width="0.7" transform="rotate(-55 675 358)"/><ellipse cx="689" cy="348" rx="2" ry="1" fill="#aac460" stroke="#93a040" stroke-width="0.7" transform="rotate(-55 689 348)"/><path d="M790,356 C795,362 800,370 806,380" fill="none" stroke="#4a9fd5" stroke-width="1.3"/><path d="M790,356 C795,362 800,370 806,380" fill="none" stroke="#9aa84a" stroke-width="0.5" opacity="0.7" transform="translate(0.8,0.8)"/><path d="M806,360 C812,367 820,376 828,386" fill="none" stroke="#4a9fd5" stroke-width="1.3"/><path d="M806,360 C812,367 820,376 828,386" fill="none" stroke="#9aa84a" stroke-width="0.5" opacity="0.7" transform="translate(0.8,0.8)"/><path d="M818,372 C825,380 832,387 840,397" fill="none" stroke="#4a9fd5" stroke-width="1.3"/><path d="M818,372 C825,380 832,387 840,397" fill="none" stroke="#9aa84a" stroke-width="0.5" opacity="0.7" transform="translate(0.8,0.8)"/><path d="M832,398 C838,404 843,410 848,418" fill="none" stroke="#4a9fd5" stroke-width="1.3"/><path d="M832,398 C838,404 843,410 848,418" fill="none" stroke="#9aa84a" stroke-width="0.5" opacity="0.7" transform="translate(0.8,0.8)"/><path d="M812,392 C818,397 823,400 828,404" fill="none" stroke="#4a9fd5" stroke-width="1.3"/><path d="M812,392 C818,397 823,400 828,404" fill="none" stroke="#9aa84a" stroke-width="0.5" opacity="0.7" transform="translate(0.8,0.8)"/><path d="M848,392 C852,398 856,404 860,412" fill="none" stroke="#4a9fd5" stroke-width="1.3"/><path d="M848,392 C852,398 856,404 860,412" fill="none" stroke="#9aa84a" stroke-width="0.5" opacity="0.7" transform="translate(0.8,0.8)"/><path d="M800,352 L804,357" fill="none" stroke="#4a9fd5" stroke-width="1.3"/><path d="M800,352 L804,357" fill="none" stroke="#9aa84a" stroke-width="0.5" opacity="0.7" transform="translate(0.8,0.8)"/><ellipse cx="595" cy="402" rx="6" ry="2" transform="rotate(-55 595 402)" fill="#a6c0dd" stroke="#8aa0b8" stroke-width="0.5"/><ellipse cx="603.5" cy="370.5" rx="2.5" ry="1.3" transform="rotate(0 603.5 370.5)" fill="#a6c0dd" stroke="#8aa0b8" stroke-width="0.5"/><ellipse cx="575" cy="360.5" rx="3.5" ry="1" transform="rotate(-10 575 360.5)" fill="#a6c0dd" stroke="#8aa0b8" stroke-width="0.5"/><ellipse cx="574.5" cy="367" rx="3" ry="1" transform="rotate(20 574.5 367)" fill="#a6c0dd" stroke="#8aa0b8" stroke-width="0.5"/><ellipse cx="607" cy="370" rx="4.5" ry="1.5" transform="rotate(-5 607 370)" fill="#a6c0dd" stroke="#8aa0b8" stroke-width="0.5"/><ellipse cx="601" cy="387" rx="3.5" ry="1.2" transform="rotate(10 601 387)" fill="#a6c0dd" stroke="#8aa0b8" stroke-width="0.5"/><ellipse cx="529" cy="348" rx="2.5" ry="2" transform="rotate(0 529 348)" fill="#a6c0dd" stroke="#8aa0b8" stroke-width="0.5"/><ellipse cx="622.6" cy="160" rx="2.2" ry="1.6" transform="rotate(0 622.6 160)" fill="#a6c0dd" stroke="#8aa0b8" stroke-width="0.5"/><ellipse cx="552" cy="226" rx="1.5" ry="1" transform="rotate(0 552 226)" fill="#a6c0dd" stroke="#8aa0b8" stroke-width="0.5"/><path d="M640.6,162.8 C638,170 637,176 636.8,179.8 C630,186 625,188 620.7,189.3 C612,191 608,191 603.6,191.2 C596,190 592,189 588.5,189.3 C582,189.5 578,190 574.2,190.3" fill="none" stroke="#a6c2dc" stroke-width="1.1"/><path d="M560,206.4 C568,205 574,205 579,205.5 C586,207 590,208 594,210.2 C601,213 608,216 613,217.8" fill="none" stroke="#a6c2dc" stroke-width="1.1"/><path d="M565.7,227.3 C572,225 578,224 584.7,223.5 C590,223 594,223 598,223.5 C605,225 612,227 617,229.2" fill="none" stroke="#a6c2dc" stroke-width="1.1"/><path d="M724,261 C715,255 705,250 701,249 C696,243 693,238 690.7,236.3 C685,234 680,233 678,233 C670,238 660,242 655,244.6 C652,248 652,251 651,253 C646,255 643,256 640.6,257 C630,261 622,264 617.6,265.5 C610,268 605,269 601,269.7 C595,270 591,270 588.4,270.7 C584,275 582,279 580,282 C577,286 576,288 575,290 C572,295 570,298 569,301.6 C568,308 567,314 567,320 C560,322 552,323 548,323 C540,326 530,330 520,332" fill="none" stroke="#a6c2dc" stroke-width="1.1"/><path d="M705,218 C698,224 690,230 678,233" fill="none" stroke="#a6c2dc" stroke-width="1.1"/><path d="M640.6,266.5 C646,267 650,267 655.2,267.6 C665,270 672,272 678,273.8 C686,277 692,280 697,282 C702,285 706,287 709.5,288.5 C714,292 718,295 722,297" fill="none" stroke="#a6c2dc" stroke-width="1.1"/><path d="M592.5,253 C596,250 598,248 601,246.7 C606,245.5 610,245 613.4,244.6 C620,240 624,237 628,235.2 C634,233 638,231 642.6,230" fill="none" stroke="#a6c2dc" stroke-width="1.1"/><path d="M580,326 C588,324 595,322 601,319.8 C607,314 611,308 615.5,303 C619,298 622,294 626,290.5" fill="none" stroke="#a6c2dc" stroke-width="1.1"/><path d="M613.4,301 C618,310 624,318 628,324" fill="none" stroke="#a6c2dc" stroke-width="1.1"/><path d="M676,292.6 C677,297 678,300 678,303 C672,305 665,306 659,307 C655,315 653,322 651,330" fill="none" stroke="#a6c2dc" stroke-width="1.1"/><path d="M709.5,303 C705,306 702,309 699,311.4 C701,317 703,322 705.3,328" fill="none" stroke="#a6c2dc" stroke-width="1.1"/><path d="M632,214 C635,219 638,223 639.7,227.3" fill="none" stroke="#a6c2dc" stroke-width="1.1"/><path d="M651,209.3 C650,215 648,220 645.4,225.4" fill="none" stroke="#a6c2dc" stroke-width="1.1"/><use href="#pl" x="547" y="206"/><use href="#pl" x="548" y="219"/><use href="#pl" x="567" y="226"/><use href="#pl" x="584" y="217"/><use href="#pl" x="631" y="221"/><use href="#pl" x="678" y="225"/><use href="#pl" x="681" y="273"/><use href="#pl" x="702" y="281"/><use href="#pl" x="714" y="287"/><use href="#pl" x="687" y="307"/><use href="#pl" x="683" y="327"/><use href="#pl" x="691" y="338"/><use href="#pl" x="749" y="348"/><use href="#pl" x="789" y="339"/><use href="#pl" x="788" y="343"/><use href="#pl" x="790" y="360"/><use href="#pl" x="796" y="364"/><use href="#pl" x="816" y="380"/><use href="#pl" x="826.5" y="379"/><use href="#pl" x="833" y="384"/><use href="#pl" x="832" y="403"/><use href="#pl" x="850" y="408"/><use href="#pl" x="557" y="236"/><use href="#pl" x="504" y="236"/><use href="#pl" x="511" y="243"/><use href="#pl" x="555" y="247"/><use href="#pl" x="555" y="257"/><use href="#pl" x="547" y="260"/><use href="#pl" x="518" y="260"/><use href="#pl" x="466" y="262"/><use href="#pl" x="475" y="266"/><use href="#pl" x="588" y="262"/><use href="#pl" x="589" y="269"/><use href="#pl" x="555" y="276"/><use href="#pl" x="521" y="294"/><use href="#pl" x="530" y="307"/><use href="#pl" x="505" y="308"/><use href="#pl" x="559" y="300"/><use href="#pl" x="594.5" y="298.5"/><use href="#pl" x="598" y="298"/><use href="#pl" x="562" y="320"/><use href="#pl" x="597" y="332"/><use href="#pl" x="540" y="335"/><use href="#pl" x="498" y="336"/><use href="#pl" x="604" y="357"/><use href="#pl" x="600" y="366"/><use href="#pl" x="569" y="369"/><use href="#pl" x="586" y="377"/><use href="#pl" x="533" y="374"/><use href="#pl" x="647" y="308"/><use href="#pl" x="653" y="321"/><use href="#pl" x="649" y="329"/><use href="#pl" x="638" y="342"/><use href="#pl" x="655" y="349"/><use href="#pl" x="636" y="359"/><use href="#pl" x="565" y="409"/><use href="#pl" x="626" y="396"/><use href="#pl" x="518" y="438"/><use href="#pl" x="474" y="456"/><use href="#pl" x="636" y="364"/><use href="#pl" x="448" y="386"/><use href="#pl" x="449" y="399"/><use href="#pl" x="379.5" y="465"/><use href="#pl" x="442.5" y="468"/><use href="#pl" x="615" y="239"/><use href="#pl" x="627" y="254"/><use href="#pl" x="626" y="280"/><use href="#pl" x="652" y="265"/><use href="#pl" x="652" y="271"/><use href="#pl" x="663" y="259"/><use href="#pl" x="668" y="261"/></g>
</svg>

<div id="status" class="abs"></div>
<svg class="abs" style="left:0;top:497px" width="100" height="30">
<rect x="75" y="6.5" width="16.5" height="17" rx="3" fill="#fbfbfb" stroke="#aaa7a2"/>
<ellipse cx="84.3" cy="18" rx="4.3" ry="3.8" fill="#fff" stroke="#111" stroke-width="1.8"/>
<circle cx="83.8" cy="19" r="1.3" fill="#111"/>
<ellipse cx="80.8" cy="11.8" rx="3.4" ry="5" transform="rotate(-28 80.8 11.8)" fill="#fff" stroke="#111" stroke-width="2"/>
<ellipse cx="80.8" cy="11.8" rx="0.9" ry="3" transform="rotate(-28 80.8 11.8)" fill="none" stroke="#111" stroke-width="0.9"/>
<circle cx="87.5" cy="10" r="0.8" fill="#111"/><circle cx="89.3" cy="8.2" r="0.8" fill="#111"/>
</svg>
<div class="st" style="left:102.5px;top:505px;font-size:13.7px">Coordinate:</div>
<div class="abs" style="left:184px;top:503px;width:298px;height:18px;box-sizing:border-box;border:1px solid #a9a59e;border-radius:3px;background:#fff;"></div>
<div class="st" style="left:182.5px;top:505px;width:298px;text-align:center;font-size:13.45px;color:#333">-6761566,5287365</div>
<div class="st" style="left:492.5px;top:505px;font-size:13.5px">Scale</div>
<div class="abs" style="left:537px;top:503px;width:97px;height:18px;box-sizing:border-box;border:1px solid #a9a59e;border-radius:3px;background:#fff;overflow:hidden;"></div>
<div class="abs" style="left:609px;top:504px;width:24px;height:16px;border-left:1px solid #d0cdc8;border-radius:0 2px 2px 0;background:linear-gradient(#fdfdfd,#ecebea);box-sizing:border-box"></div>
<div class="abs" style="left:538.5px;top:509px;width:70px;height:10px;overflow:hidden"><div class="st" style="left:1px;top:-4px;font-size:13.3px;color:#333">:22240717</div></div>
<svg class="abs" style="left:612px;top:504px" width="80" height="18">
<path d="M6.5,5.5 h8 l-4,5 z" fill="#6a6a6a"/>
<rect x="31.5" y="-0.5" width="17" height="17" rx="2.5" fill="#f2f2f2" stroke="#a0a0a0"/>
<path d="M47.5,0.5 C44,4 40,9 37,13 C35.5,15 34,15.5 33,16 C35,16.5 38,15.5 39.5,13.5 C42,10 45,5 47.5,0.5 z" fill="#5a5a5a" stroke="#3a3a3a" stroke-width="0.8"/>
<circle cx="37.5" cy="4.6" r="3.6" fill="#fff" stroke="#d42a2a" stroke-width="1.7"/><path d="M35,2.1 l5,5" stroke="#d42a2a" stroke-width="1.5"/>
</svg>
<div class="cb" style="left:671px;top:504px"></div>
<svg class="abs" style="left:671px;top:503.5px" width="16" height="16"><path d="M2.8,7.5 l3.6,3.6 l7.6,-8" stroke="#6e3a2a" stroke-width="2.3" fill="none"/></svg>
<div class="st" style="left:693px;top:505px;font-size:13.3px">Render</div>
<div class="st" style="left:752.5px;top:505px;font-size:12.5px;color:#9a9894">EPSG:2964</div>
<svg class="abs" style="left:826px;top:502px" width="22" height="22">
<rect x="3.5" y="1.5" width="17" height="17" rx="3" fill="#f2f2f2" stroke="#9a9a9a"/>
<circle cx="12" cy="10" r="6.3" fill="#e4e4e4" stroke="#555" stroke-width="1.3"/>
<circle cx="12" cy="10" r="3.8" fill="none" stroke="#666" stroke-width="1"/>
<path d="M12,3.5 v13 M5.5,10 h13" stroke="#555" stroke-width="1.1"/>
<rect x="9.8" y="7.8" width="4.4" height="4.4" fill="#eee" stroke="#555" stroke-width="0.9"/>
</svg>
<svg class="abs" style="left:858px;top:511px" width="14" height="14">
<path d="M9.5,2 h1.2 v1.2 h-1.2z M6.5,5 h1.2 v1.2 h-1.2z M9.5,5 h1.2 v1.2 h-1.2z M3.5,8 h1.2 v1.2 h-1.2z M6.5,8 h1.2 v1.2 h-1.2z M9.5,8 h1.2 v1.2 h-1.2z M3.5,11 h1.2 v1.2 h-1.2z M6.5,11 h1.2 v1.2 h-1.2z M9.5,11 h1.2 v1.2 h-1.2z" fill="#c4c1bc"/>
</svg>
<div class="abs" style="left:872px;top:27px;width:1px;height:500px;background:#4a4945"></div>
<div class="abs" style="left:0;top:51px;width:1px;height:476px;background:linear-gradient(#1e1e1c,#8a8884 40px,#a3a19c 90px,#a3a19c)"></div>
</body></html>
